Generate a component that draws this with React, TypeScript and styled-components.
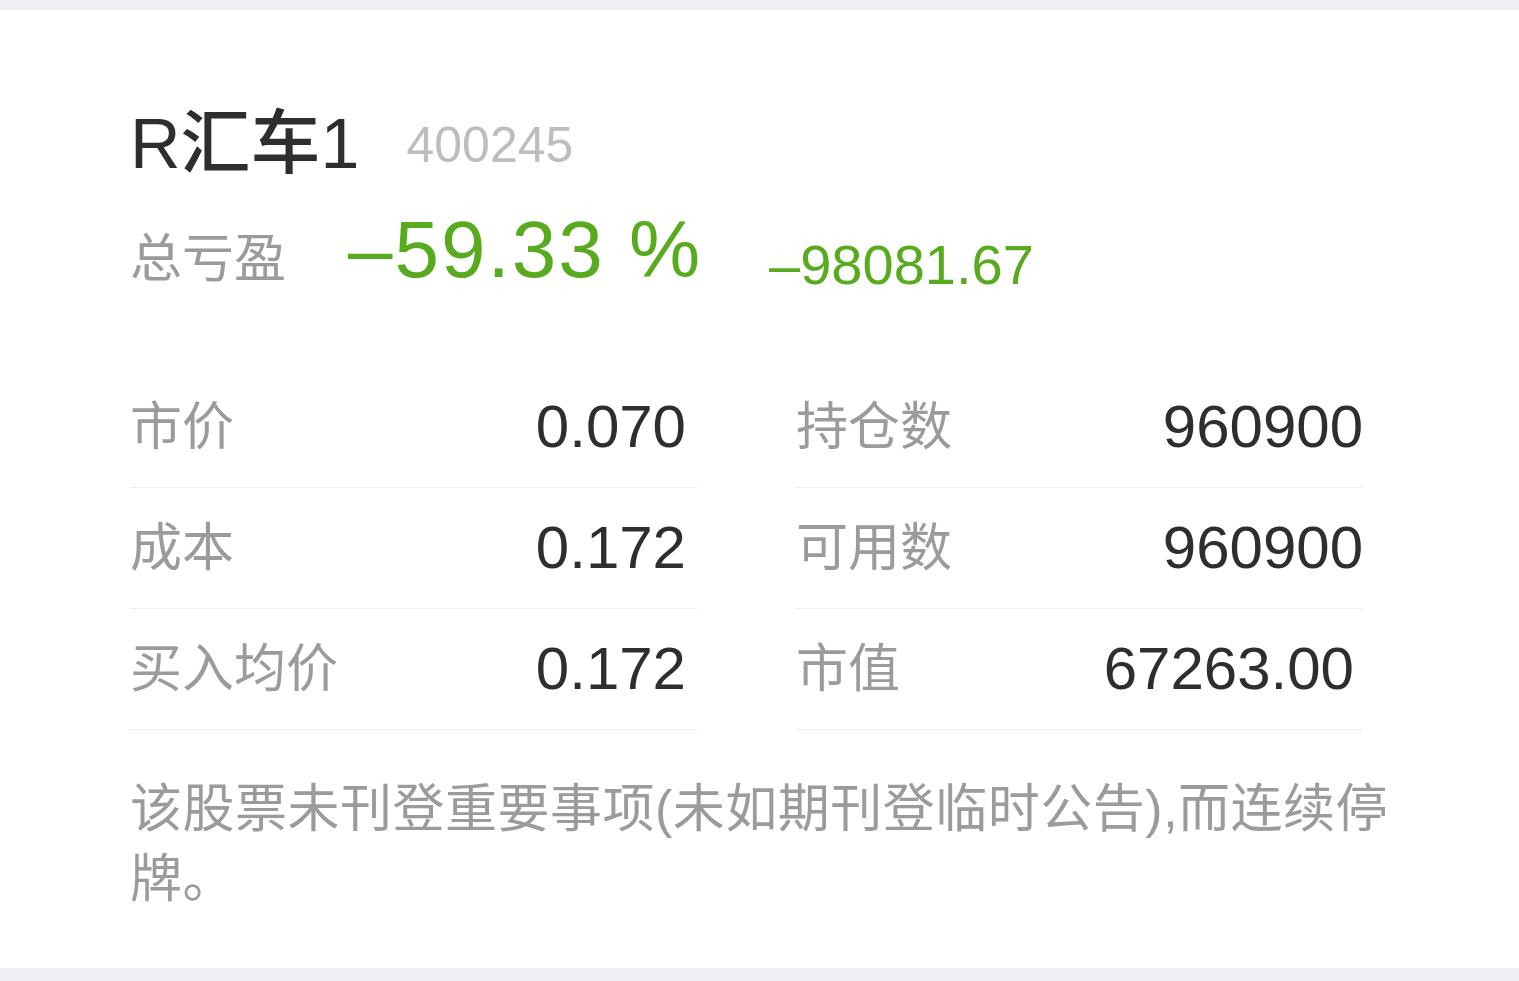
import React from "react";
import styled, { createGlobalStyle } from "styled-components";

const GlobalStyle = createGlobalStyle`
  html, body {
    margin: 0;
    padding: 0;
    background: #efeef3;
  }
  body {
    font-family: "Liberation Sans", "Noto Sans CJK SC", sans-serif;
  }
`;

const Page = styled.div`
  padding-top: 10px;
  min-height: 981px;
  box-sizing: border-box;
`;

const Card = styled.section`
  background: #ffffff;
  height: 958px;
  box-sizing: border-box;
  padding: 92px 130px 0 130px;
`;

const TitleRow = styled.div`
  display: flex;
  align-items: center;
  gap: 47px;
  height: 84px;
`;

const Name = styled.h1`
  margin: 0;
  font-size: 70px;
  line-height: 84px;
  font-weight: 500;
  color: #2e2e2e;
`;

const Code = styled.span`
  font-size: 50px;
  line-height: 1;
  color: #bdbdbd;
  padding-top: 2px;
`;

const ProfitRow = styled.div`
  margin-top: 16px;
  font-size: 80px;
  line-height: 96px;
  white-space: nowrap;
`;

const ProfitLabel = styled.span`
  font-size: 52px;
  line-height: 1;
  color: #9b9b9b;
`;

const Percent = styled.span`
  margin-left: 62px;
  font-size: 80px;
  line-height: 1;
  letter-spacing: 2px;
  color: #58aa1f;
`;

const Amount = styled.span`
  margin-left: 67px;
  font-size: 56px;
  line-height: 1;
  color: #58aa1f;
  vertical-align: -7px;
`;

const Grid = styled.div`
  margin-top: 69px;
  margin-right: 26px;
  display: grid;
  grid-template-columns: 1fr 1fr;
  column-gap: 99px;
`;

const Row = styled.div`
  display: flex;
  align-items: center;
  justify-content: space-between;
  height: 120px;
  border-bottom: 1px solid #ededed;
`;

const Label = styled.span`
  font-size: 52px;
  line-height: 1;
  color: #9b9b9b;
`;

const Value = styled.span<{ $inset: number }>`
  font-size: 60px;
  line-height: 1;
  color: #2e2e2e;
  padding-right: ${(p) => p.$inset}px;
`;

const Note = styled.p`
  margin: 44px 0 0 0;
  font-size: 52px;
  line-height: 70px;
  letter-spacing: 0.5px;
  color: #9b9b9b;
`;

type Cell = { label: string; value: string; inset: number };

const cells: Cell[] = [
  { label: "市价", value: "0.070", inset: 11 },
  { label: "持仓数", value: "960900", inset: 0 },
  { label: "成本", value: "0.172", inset: 11 },
  { label: "可用数", value: "960900", inset: 0 },
  { label: "买入均价", value: "0.172", inset: 11 },
  { label: "市值", value: "67263.00", inset: 9 },
];

export default function App() {
  return (
    <>
      <GlobalStyle />
      <Page>
        <Card>
          <TitleRow>
            <Name>R汇车1</Name>
            <Code>400245</Code>
          </TitleRow>
          <ProfitRow>
            <ProfitLabel>总亏盈</ProfitLabel>
            <Percent>–59.33 %</Percent>
            <Amount>–98081.67</Amount>
          </ProfitRow>
          <Grid>
            {cells.map((c) => (
              <Row key={c.label}>
                <Label>{c.label}</Label>
                <Value $inset={c.inset}>{c.value}</Value>
              </Row>
            ))}
          </Grid>
          <Note>
            该股票未刊登重要事项(未如期刊登临时公告),而连续停牌。
          </Note>
        </Card>
      </Page>
    </>
  );
}
